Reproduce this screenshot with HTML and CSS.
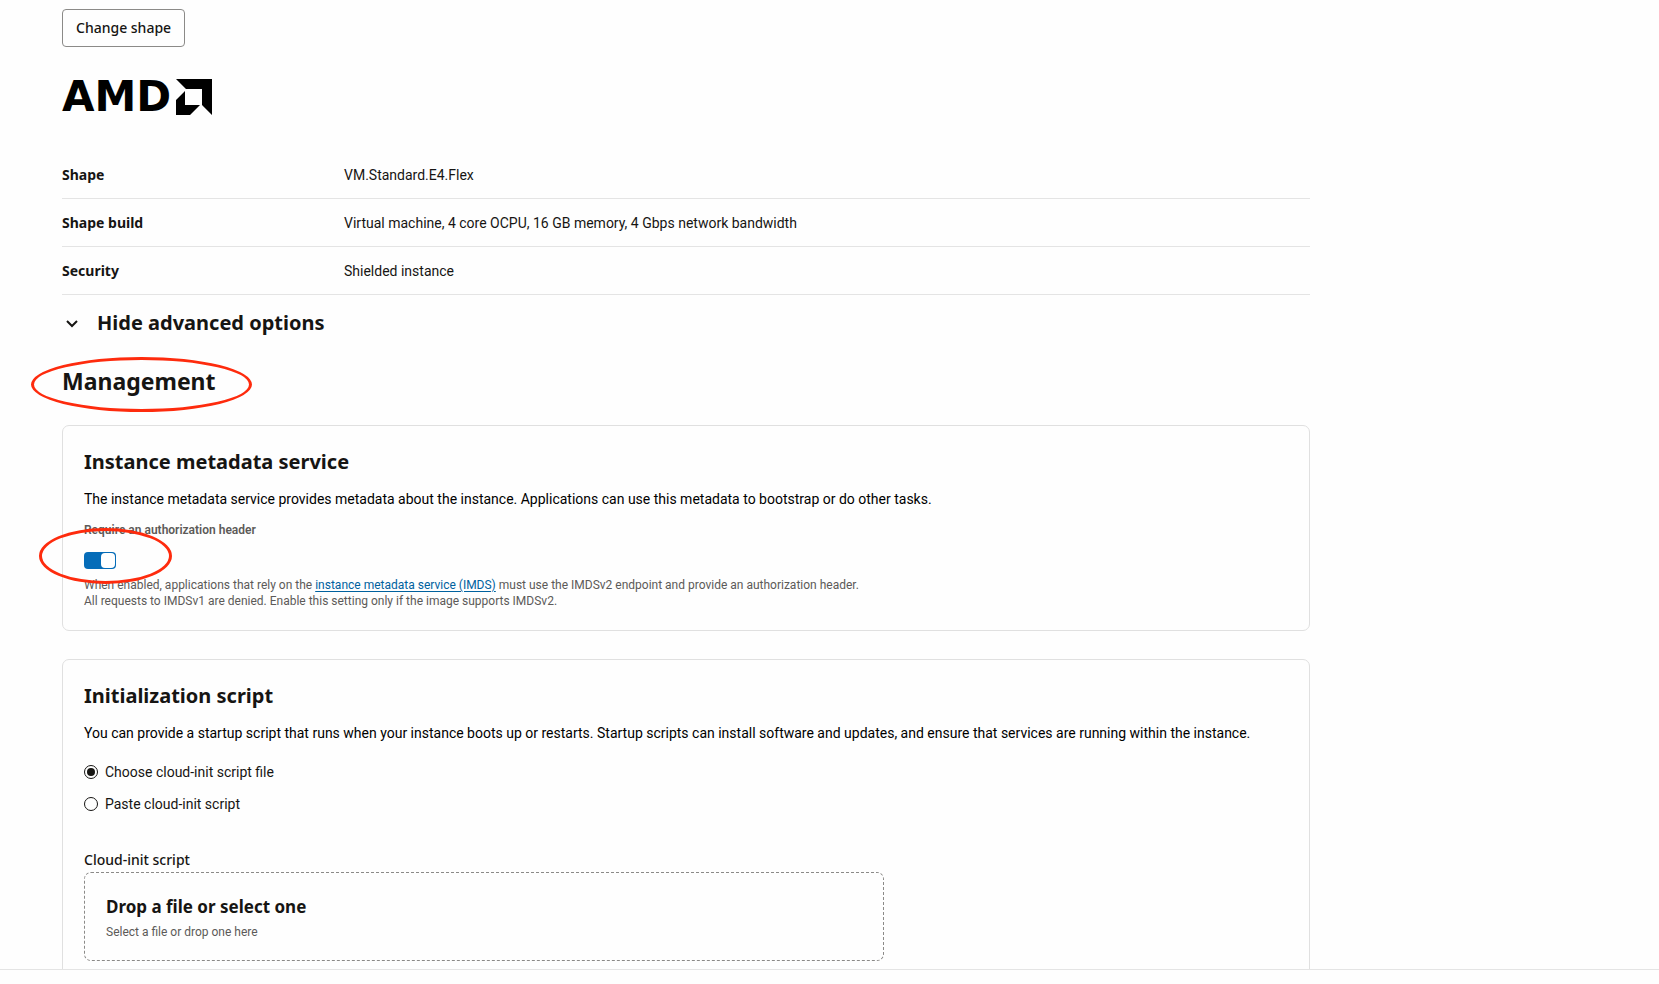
FILE: index.html
```html
<!DOCTYPE html>
<html lang="en">
<head>
    <meta charset="UTF-8">
    <meta name="viewport" content="width=device-width, initial-scale=1.0">
    <title>Create compute instance</title>
    <link rel="stylesheet" href="styles.css">
</head>
<body>
    <main class="content">
        <div class="column">
            <button type="button" class="shape-btn">Change shape</button>

            <div class="brand">
                <span class="brand-name">AMD</span>
                <svg class="brand-mark" viewBox="0 0 36 36" aria-hidden="true">
                    <path d="M0 0H36V36L26 26V10H10Z"/>
                    <path d="M9 12V26H24L14 36H0V21Z"/>
                </svg>
            </div>

            <table class="shape-table">
                <tr><th scope="row">Shape</th><td>VM.Standard.E4.Flex</td></tr>
                <tr><th scope="row">Shape build</th><td>Virtual machine, 4 core OCPU, 16 GB memory, 4 Gbps network bandwidth</td></tr>
                <tr><th scope="row">Security</th><td>Shielded instance</td></tr>
            </table>

            <button type="button" class="advanced-btn" aria-expanded="true">
                <svg class="chevron" viewBox="0 0 20 20" aria-hidden="true"><path d="M5 8L10 13L15 8"/></svg>
                Hide advanced options
            </button>

            <h2 class="section-title"><span class="marked mark-title">Management</span></h2>

            <section class="card">
                <h3>Instance metadata service</h3>
                <p class="desc">The instance metadata service provides metadata about the instance. Applications can use this metadata to bootstrap or do other tasks.</p>
                <label class="switch-label" for="auth-header">Require an authorization header</label>
                <div class="marked mark-switch">
                    <input type="checkbox" role="switch" class="switch" id="auth-header" checked>
                </div>
                <p class="help">When enabled, applications that rely on the <a href="#">instance metadata service (IMDS)</a> must use the IMDSv2 endpoint and provide an authorization header.<br>All requests to IMDSv1 are denied. Enable this setting only if the image supports IMDSv2.</p>
            </section>

            <section class="card">
                <h3>Initialization script</h3>
                <p class="desc">You can provide a startup script that runs when your instance boots up or restarts. Startup scripts can install software and updates, and ensure that services are running within the instance.</p>
                <div class="radios">
                    <label><input type="radio" name="script" checked>Choose cloud-init script file</label>
                    <label><input type="radio" name="script">Paste cloud-init script</label>
                </div>
                <div class="field-label" id="drop-label">Cloud-init script</div>
                <button type="button" class="drop" aria-describedby="drop-label">
                    <span class="drop-title">Drop a file or select one</span>
                    <span class="drop-hint">Select a file or drop one here</span>
                </button>
            </section>
        </div>
    </main>
    <footer class="bar"></footer>
</body>
</html>
```
FILE: styles.css
```css
*, *::before, *::after { box-sizing: border-box; }
body { margin: 0; height: 100vh; display: flex; flex-direction: column; background: #fefefe; color: #161513; font-family: Roboto, "Noto Sans", sans-serif; font-size: 14px; line-height: 20px; }
button { font: inherit; color: inherit; background: none; cursor: pointer; }
h2, h3, p { margin: 0; }
h2, h3, th, .shape-btn, .advanced-btn, .drop-title, .field-label { font-family: "Noto Sans", sans-serif; }

.content { flex: 1; min-height: 0; overflow: hidden; padding: 9px 37px 0 62px; }
.column { width: 80%; }
.bar { height: 15px; flex: none; border-top: 1px solid #e4e4e4; }

.shape-btn { display: block; height: 38px; padding: 0 13px; border: 1px solid #8b8a88; border-radius: 4px; font-weight: 500; }

.brand { display: flex; align-items: center; gap: 5px; height: 36px; margin-top: 32px; color: #000; }
.brand-name { font-family: "DejaVu Sans", sans-serif; font-weight: 700; font-size: 42px; line-height: 36px; }
.brand-mark { width: 36px; height: 36px; fill: #000; }

.shape-table { width: 100%; margin-top: 36px; border-collapse: separate; border-spacing: 0; table-layout: fixed; }
.shape-table th, .shape-table td { height: 48px; padding: 0; border-bottom: 1px solid #e4e4e4; text-align: left; vertical-align: middle; }
.shape-table th { width: 282px; font-weight: 700; }

.advanced-btn { display: flex; align-items: center; gap: 15px; margin-top: 14px; padding: 0; border: none; font-size: 20px; font-weight: 700; line-height: 28px; }
.chevron { width: 20px; height: 20px; fill: none; stroke: #161513; stroke-width: 2; }

.section-title { margin-top: 28px; font-size: 23px; font-weight: 700; line-height: 32px; }

/* red highlight rings */
.marked { position: relative; display: inline-block; }
.marked::after { content: ""; position: absolute; border: 3px solid #fe2b0d; border-radius: 50%; pointer-events: none; }
.mark-title::after { left: -31px; top: -8px; width: 221px; height: 55px; }
.mark-switch::after { left: -45px; top: -24px; width: 133px; height: 56px; }

.card { margin-top: 28px; padding: 22px 21px 21px; border: 1px solid #e0e0e0; border-radius: 7px; }
.card h3 { font-size: 20px; font-weight: 700; line-height: 28px; }
.desc { margin-top: 13px; color: #000; }

.switch-label { display: block; margin-top: 13px; font-size: 12px; font-weight: 600; line-height: 16px; color: #5c5a58; }
.mark-switch { display: block; margin-top: 14px; height: 17px; }
.switch { appearance: none; display: block; width: 32px; height: 17px; margin: 0; padding: 1px; border-radius: 4px; background: #056cb8; cursor: pointer; }
.switch::before { content: ""; display: block; width: 14px; height: 15px; border-radius: 4px; background: #fff; }
.switch:checked::before { margin-left: auto; }

.help { margin-top: 8px; font-size: 12px; line-height: 16px; color: #5c5a58; }
.help a { color: #00619e; text-underline-offset: 2px; }

.radios { display: flex; flex-direction: column; align-items: flex-start; gap: 12px; margin-top: 19px; }
.radios label { display: flex; align-items: center; gap: 7px; }
.radios input { appearance: none; display: grid; place-items: center; width: 14px; height: 14px; margin: 0; border: 1px solid #161513; border-radius: 50%; }
.radios input:checked::before { content: ""; width: 8px; height: 8px; border-radius: 50%; background: #161513; }

.field-label { margin-top: 36px; font-weight: 500; }
.drop { display: flex; flex-direction: column; align-items: flex-start; width: 100%; max-width: 800px; margin-top: 2px; padding: 22px 21px 20px; border: 1px dashed #8b8a88; border-radius: 7px; text-align: left; }
.drop-title { font-size: 17px; font-weight: 700; line-height: 24px; }
.drop-hint { margin-top: 5px; font-size: 12px; line-height: 16px; color: #5c5a58; }
```
